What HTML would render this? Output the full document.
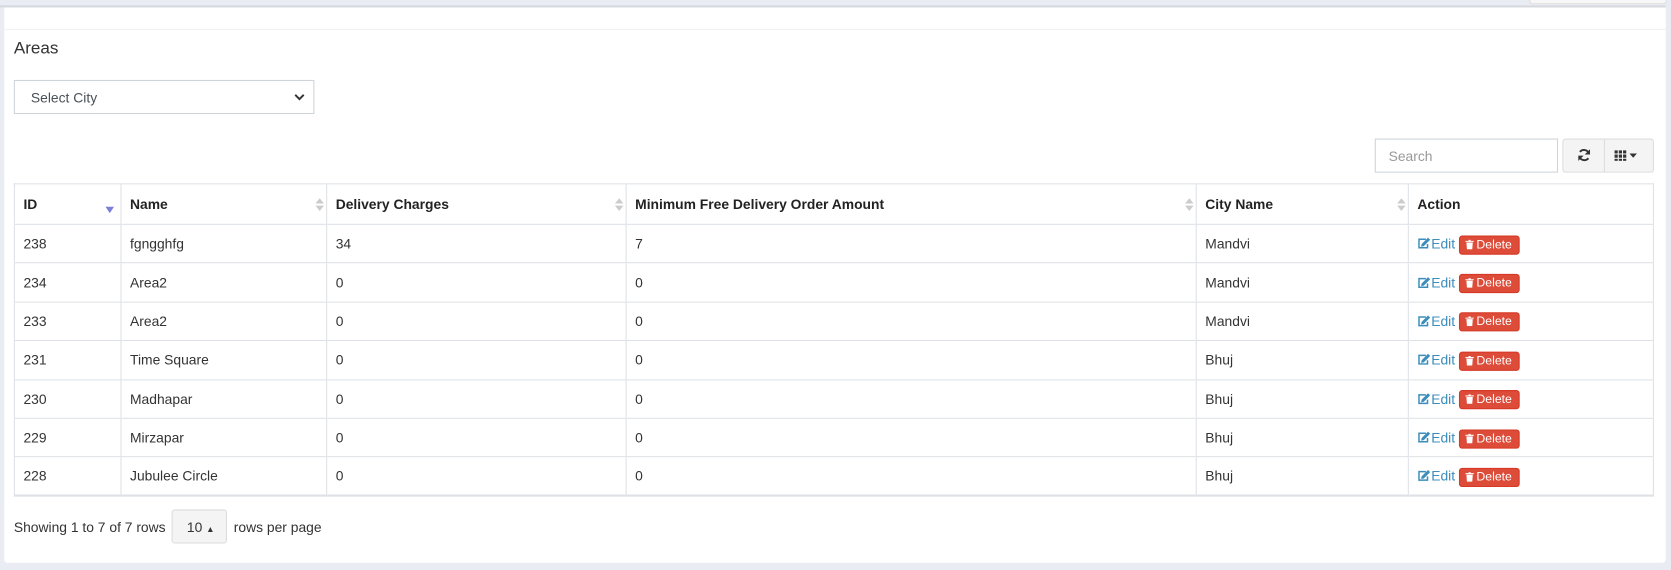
<!DOCTYPE html>
<html><head><style>
*{box-sizing:border-box;margin:0;padding:0}
html,body{width:1671px;height:570px;overflow:hidden;background:#e9ecf3}
body{font-family:"Liberation Sans",sans-serif;font-size:13px;color:#333}
#wrap{position:absolute;left:0;top:0;width:1568px;height:535px;transform:scale(1.0657);transform-origin:0 0}
.topbar2{position:absolute;left:0;top:5px;width:1563px;height:2px;background:#d6d9de}
.rtab{position:absolute;left:1435px;top:0;width:129px;height:4px;background:#f7f7f7;border:1px solid #ddd;border-top:none;border-radius:0 0 3px 3px}
.card{position:absolute;left:4px;top:7px;width:1559px;height:521px;background:#fff;border-radius:0 0 3px 3px}
.hdrline{position:absolute;left:0;top:20px;width:100%;height:1px;background:#eef0f2}
h3{position:absolute;left:9px;top:30px;font-weight:normal;font-size:16px;color:#333}
.sel{position:absolute;left:9px;top:68px;width:282px;height:32px;border:1px solid #ced4da;padding:8px 15px;font-size:13px;color:#495057}
.sel svg{position:absolute;right:8px;top:12px}
.search{position:absolute;left:1286px;top:123px;width:172px;height:32px;border:1px solid #ced4da;padding:8px 12px;color:#999;font-size:13px}
.btns{position:absolute;left:1462px;top:123px;width:86px;height:32px;border:1px solid #ddd;border-radius:3px;background:#f4f4f4}
.btns .d{position:absolute;left:38px;top:0;width:1px;height:30px;background:#ddd}
table{position:absolute;left:9px;top:165px;width:1539px;border-collapse:collapse;border:1px solid #dee2e6}
th,td{border-left:1px solid #dee2e6;border-bottom:1px solid #dee2e6;text-align:left;padding:0 8px;vertical-align:middle;position:relative}
th{height:38px;font-weight:bold;font-size:13px;color:#222}
td{height:36.4px;font-size:13px;color:#333}
tr:last-child td{border-bottom:2px solid #dee2e6}
.srt{position:absolute;right:6px;top:13px;width:0;height:0}
.srt:before{content:"";position:absolute;left:-4px;top:0;border:4px solid transparent;border-bottom:5px solid #ccc;border-top:0}
.srt:after{content:"";position:absolute;left:-4px;top:7px;border:4px solid transparent;border-top:5px solid #ccc;border-bottom:0}
.down{position:absolute;right:6px;top:21px;border:4px solid transparent;border-top:6px solid #7b7fd8;border-bottom:0}
.edit{color:#3c8dbc;font-size:13px;vertical-align:middle}
.edit svg{vertical-align:-1px;margin-right:1px}
.del{display:inline-block;background:#dd4b39;color:#fff;border:1px solid #d73925;border-radius:3px;font-size:11.5px;padding:2px 6px 2px 5px;margin-left:4px;vertical-align:middle;margin-top:2px}
.del svg{vertical-align:-1px;margin-right:2px}
.foot{position:absolute;left:9px;top:471px;height:32px;display:flex;align-items:center;font-size:13px;color:#333}
.pg{display:inline-block;margin:0 6px;width:52px;height:32px;border:1px solid #ddd;border-radius:3px;background:#f4f4f4;padding:8px 0 0 13px}
</style></head><body><div id="wrap">
<div class="topbar2"></div><div class="rtab"></div>
<div class="card">
<div class="hdrline"></div>
<h3>Areas</h3>
<div class="sel">Select City<svg width="10" height="7" viewBox="0 0 10 7"><path d="M1 1l4 4 4-4" stroke="#333" stroke-width="1.8" fill="none"/></svg></div>
<div class="search">Search</div>
<div class="btns"><svg style="position:absolute;left:13px;top:8px" width="13" height="13" viewBox="0 0 13 13"><path d="M11 5A5 5 0 0 0 2.5 3.5M2 8a5 5 0 0 0 8.5 1.5" stroke="#333" stroke-width="1.8" fill="none"/><path d="M12 1v5H7zM1 12V7h5z" fill="#333"/></svg><div class="d"></div>
<svg style="position:absolute;left:48px;top:10px" width="24" height="10" viewBox="0 0 24 10"><g fill="#333"><rect x="0" y="0" width="3" height="3"/><rect x="4" y="0" width="3" height="3"/><rect x="8" y="0" width="3" height="3"/><rect x="0" y="4" width="3" height="3"/><rect x="4" y="4" width="3" height="3"/><rect x="8" y="4" width="3" height="3"/><rect x="0" y="8" width="3" height="2"/><rect x="4" y="8" width="3" height="2"/><rect x="8" y="8" width="3" height="2"/><path d="M14 3h7l-3.5 4z"/></g></svg></div>
<table>
<tr><th style="width:100px;border-left:none">ID<span class="down"></span></th><th style="width:193px">Name<span class="srt"></span></th><th style="width:281px">Delivery Charges<span class="srt"></span></th><th style="width:535px">Minimum Free Delivery Order Amount<span class="srt"></span></th><th style="width:199px">City Name<span class="srt"></span></th><th>Action</th></tr>
<tr><td style="border-left:none">238</td><td>fgngghfg</td><td>34</td><td>7</td><td>Mandvi</td><td><span class="edit"><svg width="12" height="11" viewBox="0 0 12 11"><path d="M8 1.5H1.5v8h8V6" stroke="#3c8dbc" stroke-width="1.4" fill="none"/><path d="M10 0l2 2-6 6-2.5.5L4 6z" fill="#3c8dbc"/></svg>Edit</span><span class="del"><svg width="8" height="9" viewBox="0 0 8 9"><path d="M0 1h8v1H0zM3 0h2v1H3zM1 2.5h6L6.5 9h-5z" fill="#fff"/></svg>Delete</span></td></tr>
<tr><td style="border-left:none">234</td><td>Area2</td><td>0</td><td>0</td><td>Mandvi</td><td><span class="edit"><svg width="12" height="11" viewBox="0 0 12 11"><path d="M8 1.5H1.5v8h8V6" stroke="#3c8dbc" stroke-width="1.4" fill="none"/><path d="M10 0l2 2-6 6-2.5.5L4 6z" fill="#3c8dbc"/></svg>Edit</span><span class="del"><svg width="8" height="9" viewBox="0 0 8 9"><path d="M0 1h8v1H0zM3 0h2v1H3zM1 2.5h6L6.5 9h-5z" fill="#fff"/></svg>Delete</span></td></tr>
<tr><td style="border-left:none">233</td><td>Area2</td><td>0</td><td>0</td><td>Mandvi</td><td><span class="edit"><svg width="12" height="11" viewBox="0 0 12 11"><path d="M8 1.5H1.5v8h8V6" stroke="#3c8dbc" stroke-width="1.4" fill="none"/><path d="M10 0l2 2-6 6-2.5.5L4 6z" fill="#3c8dbc"/></svg>Edit</span><span class="del"><svg width="8" height="9" viewBox="0 0 8 9"><path d="M0 1h8v1H0zM3 0h2v1H3zM1 2.5h6L6.5 9h-5z" fill="#fff"/></svg>Delete</span></td></tr>
<tr><td style="border-left:none">231</td><td>Time Square</td><td>0</td><td>0</td><td>Bhuj</td><td><span class="edit"><svg width="12" height="11" viewBox="0 0 12 11"><path d="M8 1.5H1.5v8h8V6" stroke="#3c8dbc" stroke-width="1.4" fill="none"/><path d="M10 0l2 2-6 6-2.5.5L4 6z" fill="#3c8dbc"/></svg>Edit</span><span class="del"><svg width="8" height="9" viewBox="0 0 8 9"><path d="M0 1h8v1H0zM3 0h2v1H3zM1 2.5h6L6.5 9h-5z" fill="#fff"/></svg>Delete</span></td></tr>
<tr><td style="border-left:none">230</td><td>Madhapar</td><td>0</td><td>0</td><td>Bhuj</td><td><span class="edit"><svg width="12" height="11" viewBox="0 0 12 11"><path d="M8 1.5H1.5v8h8V6" stroke="#3c8dbc" stroke-width="1.4" fill="none"/><path d="M10 0l2 2-6 6-2.5.5L4 6z" fill="#3c8dbc"/></svg>Edit</span><span class="del"><svg width="8" height="9" viewBox="0 0 8 9"><path d="M0 1h8v1H0zM3 0h2v1H3zM1 2.5h6L6.5 9h-5z" fill="#fff"/></svg>Delete</span></td></tr>
<tr><td style="border-left:none">229</td><td>Mirzapar</td><td>0</td><td>0</td><td>Bhuj</td><td><span class="edit"><svg width="12" height="11" viewBox="0 0 12 11"><path d="M8 1.5H1.5v8h8V6" stroke="#3c8dbc" stroke-width="1.4" fill="none"/><path d="M10 0l2 2-6 6-2.5.5L4 6z" fill="#3c8dbc"/></svg>Edit</span><span class="del"><svg width="8" height="9" viewBox="0 0 8 9"><path d="M0 1h8v1H0zM3 0h2v1H3zM1 2.5h6L6.5 9h-5z" fill="#fff"/></svg>Delete</span></td></tr>
<tr><td style="border-left:none">228</td><td>Jubulee Circle</td><td>0</td><td>0</td><td>Bhuj</td><td><span class="edit"><svg width="12" height="11" viewBox="0 0 12 11"><path d="M8 1.5H1.5v8h8V6" stroke="#3c8dbc" stroke-width="1.4" fill="none"/><path d="M10 0l2 2-6 6-2.5.5L4 6z" fill="#3c8dbc"/></svg>Edit</span><span class="del"><svg width="8" height="9" viewBox="0 0 8 9"><path d="M0 1h8v1H0zM3 0h2v1H3zM1 2.5h6L6.5 9h-5z" fill="#fff"/></svg>Delete</span></td></tr>
</table>
<div class="foot">Showing 1 to 7 of 7 rows <span class="pg">10 <span style="font-size:8px">&#9650;</span></span> rows per page</div>
</div>
</div></body></html>
